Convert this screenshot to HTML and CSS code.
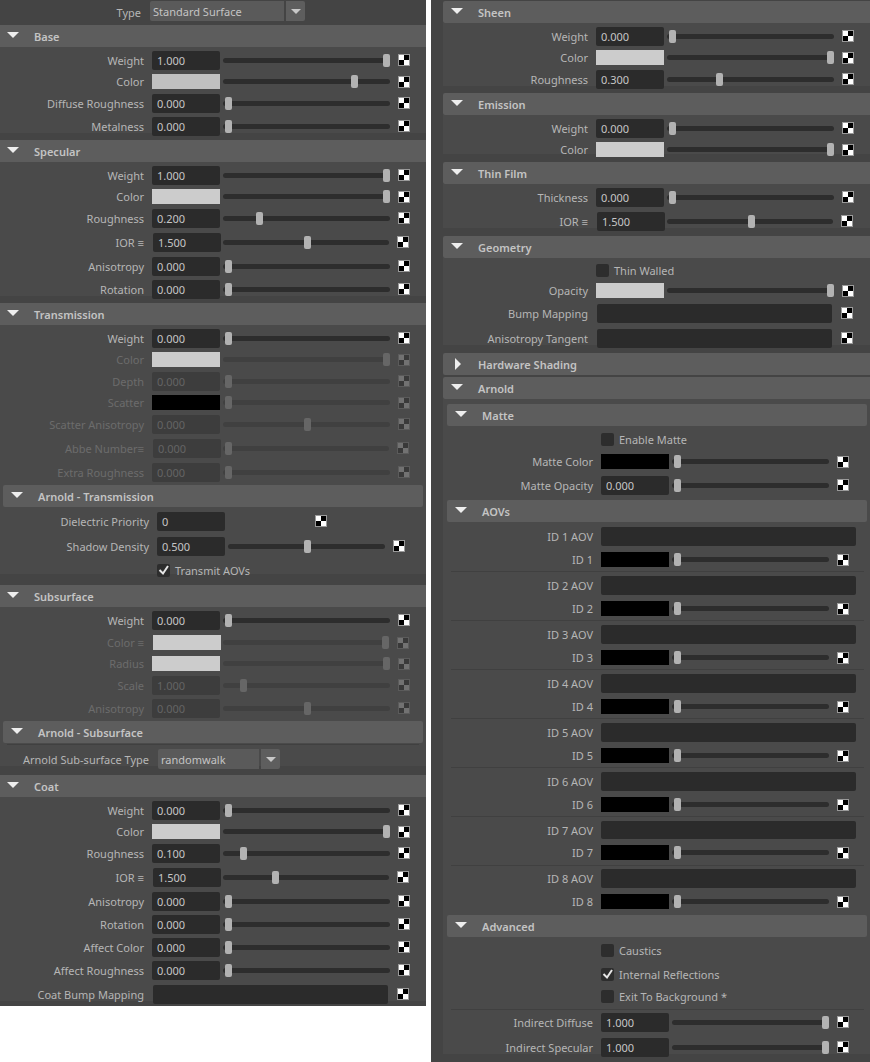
FILE: index.html
```html
<!DOCTYPE html>
<html lang="en">
<head>
    <meta charset="UTF-8">
    <title>Standard Surface</title>
    <link rel="stylesheet" href="styles.css">
</head>
<body>
<div class="panel left">
    <div class="type-row">
        <div class="lbl">Type</div>
        <div class="drop type-drop"><div class="drop-main">Standard Surface</div><div class="drop-arrow"><i></i></div></div>
    </div>

    <div class="head"><i class="tri"></i>Base</div>
    <div class="body">
        <div class="row"><div class="lbl">Weight</div><div class="field">1.000</div><div class="slider" style="--v:1"><i></i></div><i class="check"></i></div>
        <div class="row sw"><div class="lbl">Color</div><div class="swatch dim"></div><div class="slider" style="--v:.8"><i></i></div><i class="check"></i></div>
        <div class="row"><div class="lbl">Diffuse Roughness</div><div class="field">0.000</div><div class="slider" style="--v:0"><i></i></div><i class="check"></i></div>
        <div class="row"><div class="lbl">Metalness</div><div class="field">0.000</div><div class="slider" style="--v:0"><i></i></div><i class="check"></i></div>
    </div>

    <div class="head"><i class="tri"></i>Specular</div>
    <div class="body">
        <div class="row"><div class="lbl">Weight</div><div class="field">1.000</div><div class="slider" style="--v:1"><i></i></div><i class="check"></i></div>
        <div class="row sw"><div class="lbl">Color</div><div class="swatch"></div><div class="slider" style="--v:1"><i></i></div><i class="check"></i></div>
        <div class="row mb5"><div class="lbl">Roughness</div><div class="field">0.200</div><div class="slider" style="--v:.195"><i></i></div><i class="check"></i></div>
        <div class="row mb5 shift"><div class="lbl">IOR ≡</div><div class="field">1.500</div><div class="slider" style="--v:.5"><i></i></div><i class="check"></i></div>
        <div class="row"><div class="lbl">Anisotropy</div><div class="field">0.000</div><div class="slider" style="--v:0"><i></i></div><i class="check"></i></div>
        <div class="row"><div class="lbl">Rotation</div><div class="field">0.000</div><div class="slider" style="--v:0"><i></i></div><i class="check"></i></div>
    </div>

    <div class="head"><i class="tri"></i>Transmission</div>
    <div class="body">
        <div class="row"><div class="lbl">Weight</div><div class="field">0.000</div><div class="slider" style="--v:0"><i></i></div><i class="check"></i></div>
        <div class="row sw off"><div class="lbl">Color</div><div class="swatch"></div><div class="slider" style="--v:1"><i></i></div><i class="check"></i></div>
        <div class="row off"><div class="lbl">Depth</div><div class="field">0.000</div><div class="slider" style="--v:0"><i></i></div><i class="check"></i></div>
        <div class="row sw off"><div class="lbl">Scatter</div><div class="swatch black"></div><div class="slider" style="--v:0"><i></i></div><i class="check"></i></div>
        <div class="row mb5 off"><div class="lbl">Scatter Anisotropy</div><div class="field">0.000</div><div class="slider" style="--v:.5"><i></i></div><i class="check"></i></div>
        <div class="row mb5 shift off"><div class="lbl">Abbe Number≡</div><div class="field">0.000</div><div class="slider" style="--v:0"><i></i></div><i class="check"></i></div>
        <div class="row mb3 off"><div class="lbl">Extra Roughness</div><div class="field">0.000</div><div class="slider" style="--v:0"><i></i></div><i class="check"></i></div>
        <div class="sub-head"><i class="tri"></i>Arnold - Transmission</div>
        <div class="arnold">
            <div class="row mb6"><div class="lbl">Dielectric Priority</div><div class="field">0</div><i class="check lone"></i></div>
            <div class="row mb8"><div class="lbl">Shadow Density</div><div class="field">0.500</div><div class="slider" style="--v:.5"><i></i></div><i class="check"></i></div>
            <div class="row chk mb8"><div class="lbl"></div><div class="box ticked"><svg viewBox="0 0 13 13"><path d="M2.5 6 6 9.5 11 2" /></svg></div>Transmit AOVs</div>
        </div>
    </div>

    <div class="head"><i class="tri"></i>Subsurface</div>
    <div class="body">
        <div class="row mb5"><div class="lbl">Weight</div><div class="field">0.000</div><div class="slider" style="--v:0"><i></i></div><i class="check"></i></div>
        <div class="row sw mb6 off shift"><div class="lbl">Color ≡</div><div class="swatch"></div><div class="slider" style="--v:1"><i></i></div><i class="check"></i></div>
        <div class="row sw off"><div class="lbl">Radius</div><div class="swatch"></div><div class="slider" style="--v:1"><i></i></div><i class="check"></i></div>
        <div class="row off"><div class="lbl">Scale</div><div class="field">1.000</div><div class="slider" style="--v:.095"><i></i></div><i class="check"></i></div>
        <div class="row mb3 off"><div class="lbl">Anisotropy</div><div class="field">0.000</div><div class="slider" style="--v:.5"><i></i></div><i class="check"></i></div>
        <div class="sub-head"><i class="tri"></i>Arnold - Subsurface</div>
        <div class="arnold">
            <div class="sep sub-sep"></div>
            <div class="row drop-row"><div class="lbl">Arnold Sub-surface Type</div><div class="drop"><div class="drop-main">randomwalk</div><div class="drop-arrow"><i></i></div></div></div>
        </div>
    </div>

    <div class="head"><i class="tri"></i>Coat</div>
    <div class="body">
        <div class="row"><div class="lbl">Weight</div><div class="field">0.000</div><div class="slider" style="--v:0"><i></i></div><i class="check"></i></div>
        <div class="row sw"><div class="lbl">Color</div><div class="swatch"></div><div class="slider" style="--v:1"><i></i></div><i class="check"></i></div>
        <div class="row mb5"><div class="lbl">Roughness</div><div class="field">0.100</div><div class="slider" style="--v:.095"><i></i></div><i class="check"></i></div>
        <div class="row mb5 shift"><div class="lbl">IOR ≡</div><div class="field">1.500</div><div class="slider" style="--v:.3"><i></i></div><i class="check"></i></div>
        <div class="row"><div class="lbl">Anisotropy</div><div class="field">0.000</div><div class="slider" style="--v:0"><i></i></div><i class="check"></i></div>
        <div class="row"><div class="lbl">Rotation</div><div class="field">0.000</div><div class="slider" style="--v:0"><i></i></div><i class="check"></i></div>
        <div class="row"><div class="lbl">Affect Color</div><div class="field">0.000</div><div class="slider" style="--v:0"><i></i></div><i class="check"></i></div>
        <div class="row mb5"><div class="lbl">Affect Roughness</div><div class="field">0.000</div><div class="slider" style="--v:0"><i></i></div><i class="check"></i></div>
        <div class="row shift"><div class="lbl">Coat Bump Mapping</div><div class="field map"></div><i class="check"></i></div>
    </div>
</div>

<div class="panel right">
    <div class="head"><i class="tri"></i>Sheen</div>
    <div class="body">
        <div class="row"><div class="lbl">Weight</div><div class="field">0.000</div><div class="slider" style="--v:0"><i></i></div><i class="check"></i></div>
        <div class="row sw"><div class="lbl">Color</div><div class="swatch"></div><div class="slider" style="--v:1"><i></i></div><i class="check"></i></div>
        <div class="row"><div class="lbl">Roughness</div><div class="field">0.300</div><div class="slider" style="--v:.3"><i></i></div><i class="check"></i></div>
    </div>

    <div class="head"><i class="tri"></i>Emission</div>
    <div class="body">
        <div class="row"><div class="lbl">Weight</div><div class="field">0.000</div><div class="slider" style="--v:0"><i></i></div><i class="check"></i></div>
        <div class="row sw"><div class="lbl">Color</div><div class="swatch"></div><div class="slider" style="--v:1"><i></i></div><i class="check"></i></div>
    </div>

    <div class="head"><i class="tri"></i>Thin Film</div>
    <div class="body">
        <div class="row mb5"><div class="lbl">Thickness</div><div class="field">0.000</div><div class="slider" style="--v:0"><i></i></div><i class="check"></i></div>
        <div class="row mb5 shift"><div class="lbl">IOR ≡</div><div class="field">1.500</div><div class="slider" style="--v:.5"><i></i></div><i class="check"></i></div>
    </div>

    <div class="head"><i class="tri"></i>Geometry</div>
    <div class="body">
        <div class="row chk mt2 mb6"><div class="lbl"></div><div class="box"></div>Thin Walled</div>
        <div class="row sw mb6"><div class="lbl">Opacity</div><div class="swatch"></div><div class="slider" style="--v:1"><i></i></div><i class="check"></i></div>
        <div class="row mb6 shift"><div class="lbl">Bump Mapping</div><div class="field map"></div><i class="check"></i></div>
        <div class="row mb5 shift"><div class="lbl">Anisotropy Tangent</div><div class="field map"></div><i class="check"></i></div>
    </div>

    <div class="head closed"><i class="tri"></i>Hardware Shading</div>
    <div class="head"><i class="tri"></i>Arnold</div>
    <div class="body arnold">
        <div class="sub-head first"><i class="tri"></i>Matte</div>
        <div class="row chk mt7 mb8"><div class="lbl"></div><div class="box"></div>Enable Matte</div>
        <div class="row sw mb7"><div class="lbl">Matte Color</div><div class="swatch black"></div><div class="slider" style="--v:0"><i></i></div><i class="check"></i></div>
        <div class="row mb5"><div class="lbl">Matte Opacity</div><div class="field">0.000</div><div class="slider" style="--v:0"><i></i></div><i class="check"></i></div>

        <div class="sub-head"><i class="tri"></i>AOVs</div>
        <div class="row mb6 mt5"><div class="lbl">ID 1 AOV</div><div class="field aov"></div></div>
        <div class="row sw mb4"><div class="lbl">ID 1</div><div class="swatch black"></div><div class="slider" style="--v:0"><i></i></div><i class="check"></i></div>
        <div class="sep"></div>
        <div class="row mb6"><div class="lbl">ID 2 AOV</div><div class="field aov"></div></div>
        <div class="row sw mb4"><div class="lbl">ID 2</div><div class="swatch black"></div><div class="slider" style="--v:0"><i></i></div><i class="check"></i></div>
        <div class="sep"></div>
        <div class="row mb6"><div class="lbl">ID 3 AOV</div><div class="field aov"></div></div>
        <div class="row sw mb4"><div class="lbl">ID 3</div><div class="swatch black"></div><div class="slider" style="--v:0"><i></i></div><i class="check"></i></div>
        <div class="sep"></div>
        <div class="row mb6"><div class="lbl">ID 4 AOV</div><div class="field aov"></div></div>
        <div class="row sw mb4"><div class="lbl">ID 4</div><div class="swatch black"></div><div class="slider" style="--v:0"><i></i></div><i class="check"></i></div>
        <div class="sep"></div>
        <div class="row mb6"><div class="lbl">ID 5 AOV</div><div class="field aov"></div></div>
        <div class="row sw mb4"><div class="lbl">ID 5</div><div class="swatch black"></div><div class="slider" style="--v:0"><i></i></div><i class="check"></i></div>
        <div class="sep"></div>
        <div class="row mb6"><div class="lbl">ID 6 AOV</div><div class="field aov"></div></div>
        <div class="row sw mb4"><div class="lbl">ID 6</div><div class="swatch black"></div><div class="slider" style="--v:0"><i></i></div><i class="check"></i></div>
        <div class="sep"></div>
        <div class="row mb6 short"><div class="lbl">ID 7 AOV</div><div class="field aov"></div></div>
        <div class="row sw mb5"><div class="lbl">ID 7</div><div class="swatch black"></div><div class="slider" style="--v:0"><i></i></div><i class="check"></i></div>
        <div class="sep last"></div>
        <div class="row mb6"><div class="lbl">ID 8 AOV</div><div class="field aov"></div></div>
        <div class="row sw mb6"><div class="lbl">ID 8</div><div class="swatch black"></div><div class="slider" style="--v:0"><i></i></div><i class="check"></i></div>

        <div class="sub-head"><i class="tri"></i>Advanced</div>
        <div class="row chk mt7 mb11"><div class="lbl"></div><div class="box"></div>Caustics</div>
        <div class="row chk mb9"><div class="lbl"></div><div class="box ticked"><svg viewBox="0 0 13 13"><path d="M2.5 6 6 9.5 11 2" /></svg></div>Internal Reflections</div>
        <div class="row chk mb6"><div class="lbl"></div><div class="box"></div>Exit To Background *</div>
        <div class="sep tail"></div>
        <div class="row mb6"><div class="lbl">Indirect Diffuse</div><div class="field">1.000</div><div class="slider" style="--v:1"><i></i></div><i class="check"></i></div>
        <div class="row"><div class="lbl">Indirect Specular</div><div class="field">1.000</div><div class="slider" style="--v:1"><i></i></div><i class="check"></i></div>
    </div>
</div>
</body>
</html>
```

FILE: styles.css
```css
body {
    margin: 0;
    background-color: #fff;
    display: flex;
    align-items: flex-start;
    font-family: "Noto Sans", Arial, sans-serif;
    font-size: 11px;
    color: #b6b6b6;
    overflow: hidden;
}

.panel {
    background-color: #444;
    --lbl: 144px;
    --trk: 167px;
}
.left {
    width: 426px;
    height: 1006px;
}
.right {
    width: 427px;
    height: 1061px;
    margin-left: 5px;
    padding: 1px 0 0 12px;
}

/* section headers */
.head, .sub-head {
    height: 22px;
    line-height: 23px;
    background-color: #5d5d5d;
    color: #c4c4c4;
    font-weight: 600;
    display: flex;
    padding-left: 7px;
    white-space: nowrap;
}
.right .head {
    padding-left: 8px;
    border-radius: 2px 0 0 2px;
}
.head.closed {
    margin-bottom: 2px;
}
.sub-head {
    padding-left: 8px;
    margin: 0 3px 5px;
    border-radius: 2px;
}
.tri {
    width: 0;
    height: 0;
    margin: 7px 15px 0 0;
    border-left: 6px solid transparent;
    border-right: 6px solid transparent;
    border-top: 6px solid #eee;
}
.closed .tri {
    margin: 5px 17px 0 4px;
    border-top: 6px solid transparent;
    border-bottom: 6px solid transparent;
    border-left: 6px solid #eee;
    border-right: 0;
}

.body {
    padding-top: 4px;
    background-color: #4a4a4a;
    box-shadow: inset 0 -3px 0 #444;
}
.right .body {
    padding-left: 1px;
}
.sub-head.first {
    margin-top: 1px;
}
.arnold {
    --lbl: 149px;
    --trk: 157px;
}

/* rows */
.row {
    display: flex;
    align-items: center;
    height: 19px;
    margin-bottom: 4px;
}
.row.sw {
    height: 15px;
    margin-bottom: 5px;
}
.row.chk {
    height: 13px;
}
.row.short {
    height: 18px;
}
.row.short .field {
    height: 18px;
}
.row.mb3 { margin-bottom: 3px; }
.row.mb4 { margin-bottom: 4px; }
.row.mb5 { margin-bottom: 5px; }
.row.mb6 { margin-bottom: 6px; }
.row.mb7 { margin-bottom: 7px; }
.row.mb8 { margin-bottom: 8px; }
.row.mb9 { margin-bottom: 9px; }
.row.mb11 { margin-bottom: 11px; }
.mt2 { margin-top: 2px; }
.mt5 { margin-top: 5px; }
.mt7 { margin-top: 7px; }

.lbl {
    flex: none;
    width: var(--lbl);
    margin-right: 8px;
    text-align: right;
    white-space: nowrap;
}
.field {
    flex: none;
    box-sizing: border-box;
    width: 68px;
    height: 19px;
    line-height: 19px;
    padding-left: 5px;
    background-color: #2b2b2b;
    border-radius: 2px;
    color: #c6c6c6;
}
.field.map {
    width: 235px;
}
.field.aov {
    width: 255px;
}
.swatch {
    flex: none;
    width: 68px;
    height: 15px;
    background-color: #ccc;
}
.swatch.dim {
    background-color: #c0c0c0;
}
.swatch.black {
    background-color: #000;
}

/* slider: --v is the value, 0 to 1 */
.slider {
    position: relative;
    flex: none;
    width: var(--trk);
    height: 5px;
    margin-left: 3px;
    background-color: #2d2d2d;
    border-radius: 3px;
}
.slider i {
    position: absolute;
    top: -4px;
    left: calc(2px + (100% - 9px) * var(--v));
    width: 7px;
    height: 13px;
    background-color: #b2b2b2;
    border-radius: 2px;
}

.check {
    flex: none;
    box-sizing: border-box;
    width: 12px;
    height: 12px;
    margin: -2px 0 0 8px;
    border: 1px solid #9a9a9a;
    background: conic-gradient(#000 25%, #fff 0 50%, #000 0 75%, #fff 0);
}
.row.sw .check {
    margin-top: 0;
}
.check.lone {
    margin-left: 90px;
}
.field.map + .check {
    margin-left: 9px;
}

/* the IOR rows sit one pixel to the right */
.shift .lbl {
    margin-right: 9px;
}
.shift .slider {
    width: calc(var(--trk) - 1px);
    margin-left: 2px;
}

/* disabled attributes */
.off .lbl {
    color: #6c6c6c;
}
.off .field {
    background-color: #3d3d3d;
    color: #646464;
}
.off .slider {
    background-color: #404040;
}
.off .slider i {
    background-color: #666;
}
.off .check {
    opacity: .22;
}

/* checkboxes */
.box {
    flex: none;
    width: 13px;
    height: 13px;
    margin-right: 5px;
    background-color: #2d2d2d;
    border-radius: 2px;
}
.box svg {
    display: block;
}
.box path {
    fill: none;
    stroke: #e6e6e6;
    stroke-width: 2;
}

/* dropdowns */
.type-row {
    display: flex;
    height: 25px;
    --lbl: 141px;
}
.type-row .lbl {
    line-height: 25px;
    margin-right: 9px;
}
.drop {
    display: flex;
    gap: 2px;
    height: 20px;
    line-height: 22px;
    color: #c4c4c4;
}
.type-drop {
    margin-top: 1px;
}
.drop-main {
    width: 98px;
    padding-left: 3px;
    background-color: #5a5a5a;
    border-radius: 2px 0 0 2px;
}
.type-drop .drop-main {
    width: 131px;
}
.drop-arrow {
    display: flex;
    align-items: center;
    justify-content: center;
    width: 19px;
    background-color: #5e5e5e;
    border-radius: 0 2px 2px 0;
}
.drop-arrow i {
    border-left: 5px solid transparent;
    border-right: 5px solid transparent;
    border-top: 5px solid #c8c8c8;
}
.drop-row {
    height: 20px;
    margin-bottom: 6px;
}
.drop-row .lbl {
    margin-right: 9px;
}

.sep {
    height: 1px;
    margin: 0 6px 4px 7px;
    background-color: #404040;
}
.sep.last {
    margin-bottom: 3px;
}
.sep.tail {
    margin-bottom: 3px;
}
.sub-sep {
    margin: -4px 7px 4px;
}
```
